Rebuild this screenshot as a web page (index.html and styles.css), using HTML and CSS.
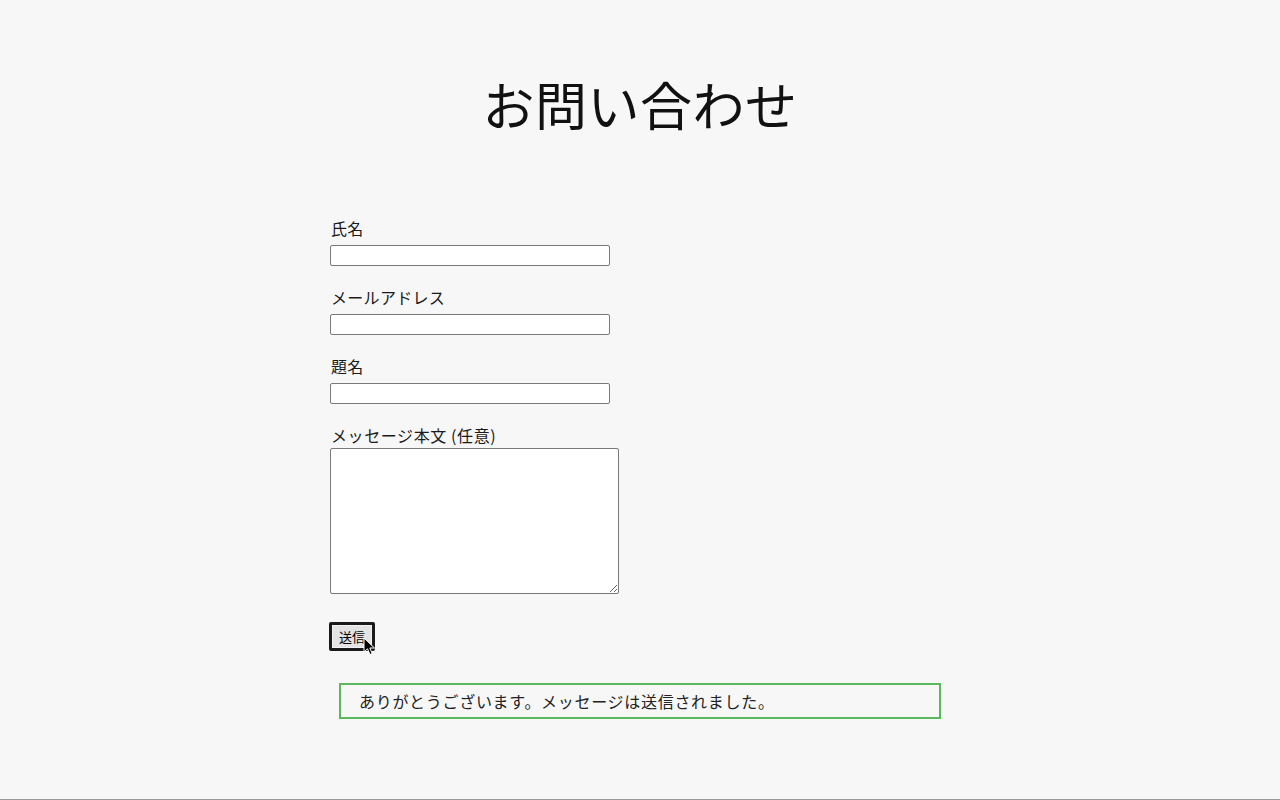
FILE: index.html
```html
<!DOCTYPE html>
<html lang="ja">
<head>
<meta charset="utf-8">
<title>お問い合わせ</title>
<link rel="stylesheet" href="styles.css">
</head>
<body>
<div class="page">
  <h1 class="title">お問い合わせ</h1>
  <div class="wrap">
    <form class="form">
      <div class="group">
        <label class="label" for="name">氏名</label>
        <input class="field" id="name" type="text">
      </div>
      <div class="group">
        <label class="label" for="email">メールアドレス</label>
        <input class="field" id="email" type="email">
      </div>
      <div class="group">
        <label class="label" for="subject">題名</label>
        <input class="field" id="subject" type="text">
      </div>
      <div class="group group-area">
        <label class="label label-tight" for="body">メッセージ本文 (任意)</label>
        <textarea class="area" id="body"></textarea>
      </div>
      <div class="actions">
        <button class="submit" type="button">送信</button>
        <svg class="cursor" width="13" height="20" viewBox="0 0 13 20" aria-hidden="true">
          <path d="M1 1 L1 15 L4.5 11.8 L7 17.5 L9.2 16.5 L6.8 11 L11.5 11 Z" fill="#000" stroke="#fff" stroke-width="1" stroke-linejoin="round"/>
        </svg>
      </div>
    </form>
    <div class="notice">ありがとうございます。メッセージは送信されました。</div>
  </div>
</div>
</body>
</html>
```
FILE: styles.css
```css
html, body {
  margin: 0;
  padding: 0;
}
body {
  background: #f7f7f7;
  color: #1a1a1a;
  font-family: "Noto Sans CJK JP", "Noto Sans", sans-serif;
}
.page {
  box-sizing: border-box;
  min-height: 800px;
  border-bottom: 1px solid #9a9a9a;
  padding-top: 78px;
}
.title {
  margin: 0;
  font-size: 52px;
  line-height: 52px;
  font-weight: 400;
  text-align: center;
  color: #111;
  letter-spacing: 0.5px;
}
.wrap {
  width: 620px;
  margin: 86px auto 0;
}
.form {
  display: flex;
  flex-direction: column;
}
.group {
  display: flex;
  flex-direction: column;
  align-items: flex-start;
  margin-bottom: 19px;
}
.label {
  font-size: 16px;
  line-height: 24px;
  margin-bottom: 5px;
  padding-left: 1px;
  color: #1a1a1a;
  letter-spacing: 0.3px;
}
.label-tight {
  margin-bottom: 1px;
  letter-spacing: 0.6px;
}
.field {
  box-sizing: border-box;
  width: 280px;
  height: 21px;
  margin: 0;
  border: 1px solid #7a7a7a;
  border-radius: 2px;
  background: #fff;
  padding: 1px 2px;
  font-size: 13px;
}
.area {
  box-sizing: border-box;
  width: 289px;
  height: 146px;
  margin: 0;
  border: 1px solid #7a7a7a;
  border-radius: 2px;
  background: #fff;
  resize: both;
}
.group-area {
  margin-bottom: 28px;
}
.actions {
  position: relative;
  display: flex;
  height: 29px;
}
.submit {
  box-sizing: border-box;
  width: 46px;
  height: 29px;
  margin: 0 0 0 -1px;
  padding: 0 4px;
  border: 3px solid #1a1a1a;
  border-radius: 2px;
  box-shadow: inset 0 0 0 1px #f2f2f2;
  background: #e3e3e3;
  color: #000;
  font-family: "Noto Sans CJK JP", sans-serif;
  font-size: 13px;
  line-height: 20px;
}
.cursor {
  position: absolute;
  left: 33px;
  top: 15px;
}
.notice {
  box-sizing: border-box;
  margin: 32px 9px 0;
  height: 36px;
  border: 2px solid #5cb85c;
  padding: 4px 18px;
  font-size: 16px;
  line-height: 24px;
  color: #222;
  letter-spacing: 0.7px;
}
```
